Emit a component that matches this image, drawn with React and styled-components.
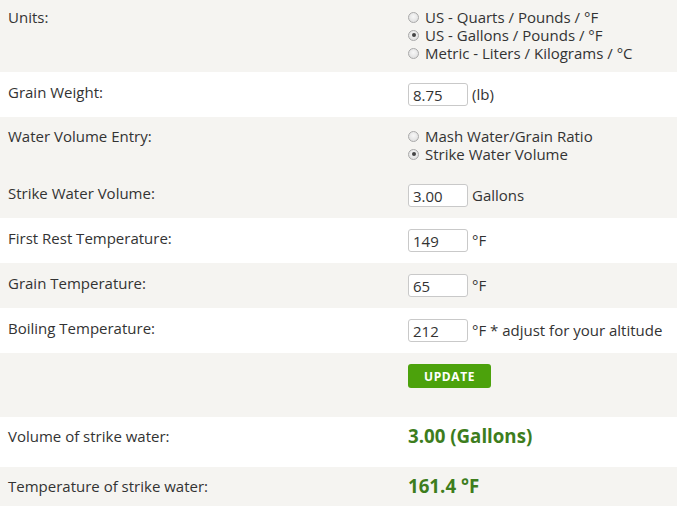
import React from "react";
import styled, { createGlobalStyle } from "styled-components";

const Global = createGlobalStyle`
  html, body { margin: 0; padding: 0; background: #ffffff; }
  body { font-family: "Open Sans", "DejaVu Sans", sans-serif; color: #333333; font-size: 15px; }
`;

const Form = styled.div`
  width: 677px;
  display: flex;
  flex-direction: column;
`;

const Row = styled.div`
  display: grid;
  grid-template-columns: 400px 1fr;
  align-items: start;
  padding: ${(p) => p.$pt}px 0 ${(p) => p.$pb}px 8px;
  background: ${(p) => (p.$shade ? "#f5f4f1" : "#ffffff")};
`;

const Label = styled.div`
  font-size: 15px;
  line-height: 18px;
  color: #333333;
`;

const Options = styled.div`
  display: flex;
  flex-direction: column;
`;

const Option = styled.label`
  display: flex;
  align-items: center;
  gap: 6px;
  font-size: 15px;
  line-height: 18px;
  color: #333333;
`;

const Radio = styled.input.attrs({ type: "radio" })`
  appearance: none;
  -webkit-appearance: none;
  margin: 0;
  width: 11px;
  height: 11px;
  border-radius: 50%;
  border: 1px solid #a9a9a9;
  background: radial-gradient(circle at 50% 40%, #f7f7f7 0%, #dadada 100%);
  box-sizing: border-box;
  position: relative;
  flex: none;
  &:checked::after {
    content: "";
    position: absolute;
    left: 2.5px;
    top: 2.5px;
    width: 4px;
    height: 4px;
    border-radius: 50%;
    background: #444444;
  }
`;

const Field = styled.div`
  display: flex;
  align-items: center;
  gap: 4px;
  font-size: 15px;
  line-height: 23px;
  color: #333333;
`;

const TextInput = styled.input.attrs({ type: "text" })`
  box-sizing: border-box;
  width: 60px;
  height: 23px;
  margin: 0;
  padding: 0 0 0 4px;
  border: 1px solid #c9c9c9;
  border-radius: 3px;
  background: #ffffff;
  font-family: "Open Sans", sans-serif;
  font-size: 15px;
  color: #333333;
  outline: none;
`;

const Button = styled.button`
  box-sizing: border-box;
  width: 83px;
  height: 24px;
  margin: 0;
  padding: 0;
  border: none;
  border-radius: 3px;
  background: #4ca20c;
  color: #ffffff;
  font-family: "Open Sans", sans-serif;
  font-weight: 700;
  font-size: 12px;
  letter-spacing: 0.6px;
  text-transform: uppercase;
  cursor: pointer;
`;

const Result = styled.div`
  font-size: 18.7px;
  font-weight: 700;
  line-height: 18px;
  color: #3d7d1d;
`;

const RadioRow = ({ label, name, options, checked, shade, pt, pb }) => (
  <Row $shade={shade} $pt={pt} $pb={pb}>
    <Label>{label}</Label>
    <Options>
      {options.map((o, i) => (
        <Option key={o}>
          <Radio name={name} defaultChecked={i === checked} />
          {o}
        </Option>
      ))}
    </Options>
  </Row>
);

const InputRow = ({ label, value, unit, shade }) => (
  <Row $shade={shade} $pt={11} $pb={11}>
    <Label>{label}</Label>
    <Field>
      <TextInput defaultValue={value} />
      <span>{unit}</span>
    </Field>
  </Row>
);

const ResultRow = ({ label, value, shade }) => (
  <Row $shade={shade} $pt={10} $pb={22}>
    <Label>{label}</Label>
    <Result>{value}</Result>
  </Row>
);

export default function App() {
  return (
    <>
      <Global />
      <Form>
        <RadioRow
          shade
          pt={8}
          pb={10}
          label="Units:"
          name="units"
          checked={1}
          options={[
            "US - Quarts / Pounds / °F",
            "US - Gallons / Pounds / °F",
            "Metric - Liters / Kilograms / °C",
          ]}
        />
        <InputRow label="Grain Weight:" value="8.75" unit="(lb)" />
        <RadioRow
          shade
          pt={10}
          pb={10}
          label="Water Volume Entry:"
          name="entry"
          checked={1}
          options={["Mash Water/Grain Ratio", "Strike Water Volume"]}
        />
        <InputRow shade label="Strike Water Volume:" value="3.00" unit="Gallons" />
        <InputRow label="First Rest Temperature:" value="149" unit="°F" />
        <InputRow shade label="Grain Temperature:" value="65" unit="°F" />
        <InputRow label="Boiling Temperature:" value="212" unit="°F * adjust for your altitude" />
        <Row $shade $pt={11} $pb={29}>
          <span />
          <div>
            <Button>Update</Button>
          </div>
        </Row>
        <ResultRow label="Volume of strike water:" value="3.00 (Gallons)" />
        <ResultRow shade label="Temperature of strike water:" value="161.4 °F" />
      </Form>
    </>
  );
}
